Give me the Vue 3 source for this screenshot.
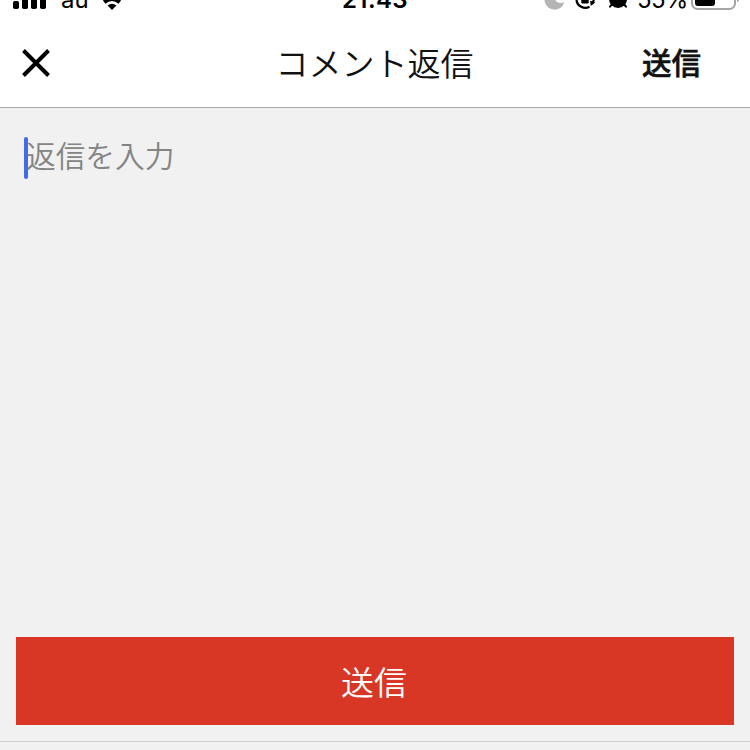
<script setup>
import { ref } from 'vue'

const carrier = ref('au')
const time = ref('21:43')
const battery = ref('55%')
const bars = [0, 1, 2, 3]
</script>

<template>
  <main class="screen">
    <div class="status">
      <div class="left">
        <svg class="signal" width="34" height="20" viewBox="0 0 34 20">
          <rect v-for="i in bars" :key="i" :x="i * 9" :y="i ? -6 * i : 1" width="6" :height="i ? 9 + 6 * i : 8" rx="1.8" />
        </svg>
        <span class="carrier">{{ carrier }}</span>
        <svg class="wifi" width="24" height="20" viewBox="0 0 24 20">
          <path d="M12 10 7.6 5.6Q12 2 16.4 5.6Z" />
          <path d="M4.2 2.1Q12 -4.1 19.8 2.1" fill="none" stroke="#000" stroke-width="4" />
        </svg>
      </div>
      <span class="time">{{ time }}</span>
      <div class="right">
        <svg width="22" height="20" viewBox="0 0 22 20">
          <path d="M.8 -3A10 10 0 0 0 20.4 2Q16.5 4 13.2 2Q10.5 .3 10.3 -3Z" fill="#b4b4b4" />
        </svg>
        <svg class="lock" width="22" height="20" viewBox="0 0 22 20">
          <path d="M1.5 0A8.9 8.9 0 0 0 14.5 6.8M18.8 0Q18.2 2.1 17.2 3.8" fill="none" stroke="#000" stroke-width="2.3" />
          <path d="M6.3 -5H13.7V2.6Q13.7 3.6 12.7 3.6H7.3Q6.3 3.6 6.3 2.6ZM15 .8 20.3 2.2 15.8 6Z" />
        </svg>
        <svg class="alarm" width="20" height="20" viewBox="0 0 20 20">
          <circle cx="10" cy="-1" r="9" />
          <path d="m4.2 4-2.2 2.7M15.8 4l2.2 2.7" stroke="#000" stroke-width="2" stroke-linecap="round" />
        </svg>
        <span class="percent">{{ battery }}</span>
        <svg class="battery" width="50" height="20" viewBox="0 0 50 20">
          <rect x="1" y="-12" width="43" height="21" rx="5.5" fill="none" stroke="#a5a5a5" stroke-width="2" />
          <rect x="4" y="-9" width="20" height="15" rx="3" />
          <path d="M46 -5Q48.8 -4 48 0Q47.5 1.8 46 2Z" fill="#a5a5a5" />
        </svg>
      </div>
    </div>

    <header class="nav">
      <button class="close" aria-label="閉じる">
        <svg width="30" height="30" viewBox="0 0 30 30">
          <path d="M2.5 2.5 27.5 27.5M27.5 2.5 2.5 27.5" stroke="#000" stroke-width="4" />
        </svg>
      </button>
      <h1>コメント返信</h1>
      <button class="send">送信</button>
    </header>

    <section class="editor">
      <span class="caret"></span>
      <span class="placeholder">返信を入力</span>
    </section>

    <footer class="footer">
      <button class="submit">送信</button>
    </footer>
    <div class="keyboard-edge"></div>
  </main>
</template>

<style>
body {
  margin: 0;
  overflow: hidden;
}
</style>

<style scoped>
.screen {
  width: 750px;
  height: 750px;
  display: flex;
  flex-direction: column;
  overflow: hidden;
  background: #f1f1f1;
  font-family: "Noto Sans CJK JP", sans-serif;
}
button {
  border: 0;
  padding: 0;
  margin: 0;
  background: none;
  font-family: inherit;
}
svg {
  display: block;
  flex: none;
}
.status {
  height: 20px;
  flex: none;
  display: grid;
  grid-template-columns: 1fr auto 1fr;
  align-items: start;
  overflow: hidden;
  background: #fff;
  font-family: Inter, sans-serif;
  font-size: 24px;
  line-height: 28px;
  color: #000;
}
.status span {
  margin-top: -14px;
}
.left,
.right {
  display: flex;
  align-items: flex-start;
}
.left {
  padding-left: 13px;
}
.carrier {
  width: 27px;
  margin-left: 14px;
}
.wifi {
  margin-left: 12px;
}
.time {
  font-weight: 600;
  letter-spacing: 0.4px;
}
.right {
  justify-content: flex-end;
}
.lock {
  margin-left: 9px;
}
.alarm {
  margin-left: 11px;
}
.percent {
  width: 50px;
  margin-left: 9px;
  white-space: nowrap;
  letter-spacing: -0.7px;
}
.battery {
  margin-left: 4px;
  margin-right: 9px;
}
.nav {
  width: 680px;
  height: 85px;
  flex: none;
  display: grid;
  grid-template-columns: 1fr auto 1fr;
  align-items: center;
  padding: 0 49px 2px 21px;
  border-bottom: 1px solid #a9a9a9;
  background: #fff;
}
.close {
  justify-self: start;
}
h1 {
  margin: 0 0 2px 27px;
  font-size: 33px;
  line-height: 46px;
  font-weight: 350;
  color: #111;
}
.send {
  justify-self: end;
  margin-bottom: 3px;
  font-size: 29.5px;
  line-height: 44px;
  font-weight: 500;
  -webkit-text-stroke: 0.6px #111;
  color: #111;
}
.editor {
  flex: 1;
  display: flex;
  align-items: flex-start;
  padding: 29px 24px 0;
}
.caret {
  width: 4px;
  height: 42px;
  border-radius: 2px;
  background: #436be6;
}
.placeholder {
  margin-left: -2px;
  font-size: 29.7px;
  line-height: 36px;
  font-weight: 350;
  color: #848484;
}
.footer {
  flex: none;
  padding: 0 16px 16px;
}
.submit {
  display: block;
  width: 100%;
  height: 88px;
  padding: 0 2px 1px 0;
  background: #d93725;
  color: #fff;
  font-size: 33px;
  font-weight: 350;
}
.keyboard-edge {
  height: 8px;
  flex: none;
  border-top: 1px solid #cfcfcf;
}
</style>
